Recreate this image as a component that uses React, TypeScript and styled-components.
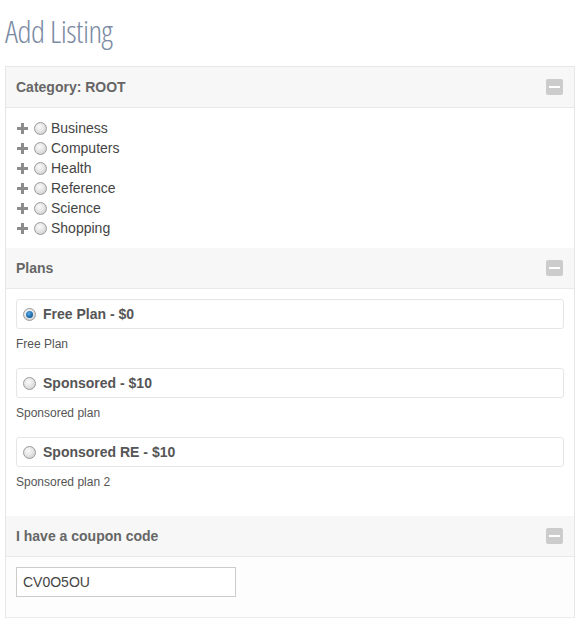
import React from "react";
import styled, { createGlobalStyle } from "styled-components";

const Global = createGlobalStyle`
  html, body { margin: 0; padding: 0; background: #fff; }
  body { font-family: "Liberation Sans", Arial, sans-serif; }
  * { box-sizing: border-box; }
`;

const Page = styled.div`
  padding: 0 6px 0 5px;
`;

const Title = styled.h1`
  margin: 0;
  height: 66px;
  padding-top: 11px;
  font-family: "Open Sans", sans-serif;
  font-weight: 300;
  font-stretch: 75%;
  font-size: 32px;
  line-height: 40px;
  color: #7b8ba3;
  letter-spacing: -0.5px;
`;

const Panel = styled.div`
  border: 1px solid #e6e6e6;
  border-bottom-color: #ececec;
  width: 570px;
`;

const SectionHeader = styled.div`
  height: 41px;
  background: #f7f7f7;
  border-bottom: 1px solid #e9e9e9;
  display: flex;
  align-items: center;
  justify-content: space-between;
  padding: 0 11px 0 10px;
  font-size: 14px;
  font-weight: bold;
  color: #666;
`;

const Collapse = styled.span`
  width: 17px;
  height: 16px;
  border-radius: 2px;
  background: #cccccc;
  display: flex;
  align-items: center;
  justify-content: center;
  &::after {
    content: "";
    width: 11px;
    height: 2px;
    background: #fff;
  }
`;

const Body = styled.div<{ $pb?: number; $bg?: string }>`
  padding: 10px 10px ${(p) => p.$pb ?? 10}px 10px;
  background: ${(p) => p.$bg ?? "#fff"};
`;

const TreeRow = styled.div`
  height: 20px;
  display: flex;
  align-items: center;
  font-size: 14px;
  color: #444;
`;

const Plus = styled.svg`
  width: 11px;
  height: 11px;
  margin: 0 6px 0 1px;
  flex: none;
`;

const Radio = styled.span<{ $checked?: boolean }>`
  width: 13px;
  height: 13px;
  border-radius: 50%;
  border: 1px solid #9a9a9a;
  background: radial-gradient(circle at 40% 35%, #fafafa 0%, #e6e6e6 45%, #c8c8c8 100%);
  display: inline-flex;
  align-items: center;
  justify-content: center;
  flex: none;
  margin-right: 4px;
  &::after {
    content: "";
    display: ${(p) => (p.$checked ? "block" : "none")};
    width: 7px;
    height: 7px;
    border-radius: 50%;
    background: radial-gradient(circle at 40% 35%, #5aa9e6 0%, #1f6fae 55%, #0d3f6e 100%);
  }
`;

const PlanItem = styled.div`
  margin-bottom: 16px;
`;

const PlanCard = styled.label`
  height: 30px;
  border: 1px solid #e6e6e6;
  border-radius: 3px;
  display: flex;
  align-items: center;
  padding: 0 8px 0 6px;
  font-size: 14px;
  font-weight: bold;
  color: #555;
  width: 548px;
  & > span:first-child {
    margin-right: 7px;
  }
`;

const PlanDesc = styled.div`
  margin-top: 7px;
  font-size: 12px;
  line-height: 16px;
  color: #555;
`;

const CouponInput = styled.input`
  width: 220px;
  height: 30px;
  border: 1px solid #cccccc;
  padding: 0 6px;
  font-family: "Liberation Sans", Arial, sans-serif;
  font-size: 14px;
  color: #444;
  outline: none;
  background: #fff;
`;

const categories = ["Business", "Computers", "Health", "Reference", "Science", "Shopping"];
const plans = [
  { name: "Free Plan - $0", desc: "Free Plan", checked: true },
  { name: "Sponsored - $10", desc: "Sponsored plan", checked: false },
  { name: "Sponsored RE - $10", desc: "Sponsored plan 2", checked: false },
];

const PlusIcon = () => (
  <Plus viewBox="0 0 11 11">
    <rect x="4" y="0" width="3" height="11" fill="#8c8c8c" />
    <rect x="0" y="4" width="11" height="3" fill="#8c8c8c" />
  </Plus>
);

export default function App() {
  return (
    <>
      <Global />
      <Page>
        <Title>Add Listing</Title>
        <Panel>
          <SectionHeader>
            <span>Category: ROOT</span>
            <Collapse />
          </SectionHeader>
          <Body>
            {categories.map((c) => (
              <TreeRow key={c}>
                <PlusIcon />
                <Radio />
                {c}
              </TreeRow>
            ))}
          </Body>
          <SectionHeader>
            <span>Plans</span>
            <Collapse />
          </SectionHeader>
          <Body>
            {plans.map((p) => (
              <PlanItem key={p.name}>
                <PlanCard>
                  <Radio $checked={p.checked} />
                  <span>{p.name}</span>
                </PlanCard>
                <PlanDesc>{p.desc}</PlanDesc>
              </PlanItem>
            ))}
          </Body>
          <SectionHeader>
            <span>I have a coupon code</span>
            <Collapse />
          </SectionHeader>
          <Body $pb={20} $bg="#fdfdfd">
            <CouponInput defaultValue="CV0O5OU" />
          </Body>
        </Panel>
      </Page>
    </>
  );
}
